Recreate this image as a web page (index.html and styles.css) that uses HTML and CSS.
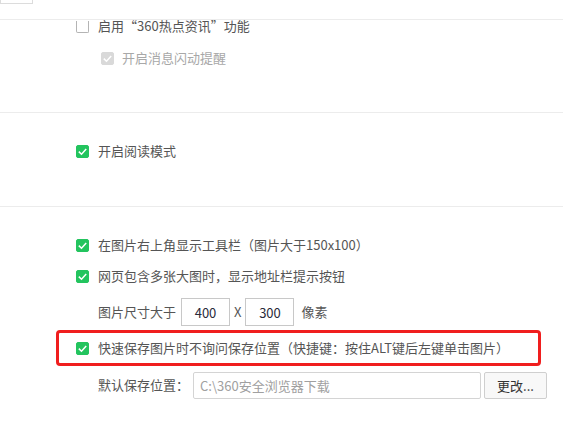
FILE: index.html
```html
<!DOCTYPE html>
<html lang="zh-CN">
<head>
    <meta charset="UTF-8">
    <title>设置</title>
    <link rel="stylesheet" href="styles.css">
</head>
<body>

<div class="stub"></div>

<div class="section section-news">
    <label class="row">
        <span class="check check-clipped"></span>
        <span class="text">启用“360热点资讯”功能</span>
    </label>
    <label class="row row-sub disabled">
        <span class="check check-disabled">
            <svg viewBox="0 0 13 13"><polyline points="2.8,6.6 5.5,9.2 10.2,4"/></svg>
        </span>
        <span class="text">开启消息闪动提醒</span>
    </label>
</div>

<div class="section section-read">
    <label class="row">
        <span class="check checked">
            <svg viewBox="0 0 13 13"><polyline points="2.8,6.6 5.5,9.2 10.2,4"/></svg>
        </span>
        <span class="text">开启阅读模式</span>
    </label>
</div>

<div class="section section-image">
    <label class="row">
        <span class="check checked">
            <svg viewBox="0 0 13 13"><polyline points="2.8,6.6 5.5,9.2 10.2,4"/></svg>
        </span>
        <span class="text">在图片右上角显示工具栏（图片大于150x100）</span>
    </label>
    <label class="row row-gap">
        <span class="check checked">
            <svg viewBox="0 0 13 13"><polyline points="2.8,6.6 5.5,9.2 10.2,4"/></svg>
        </span>
        <span class="text">网页包含多张大图时，显示地址栏提示按钮</span>
    </label>
    <div class="row row-size">
        <span class="text">图片尺寸大于</span>
        <input class="num" type="text" value="400">
        <span class="text times">X</span>
        <input class="num" type="text" value="300">
        <span class="text unit">像素</span>
    </div>
    <div class="highlight">
        <label class="row">
            <span class="check checked">
                <svg viewBox="0 0 13 13"><polyline points="2.8,6.6 5.5,9.2 10.2,4"/></svg>
            </span>
            <span class="text">快速保存图片时不询问保存位置（快捷键：按住ALT键后左键单击图片）</span>
        </label>
    </div>
    <div class="row row-path">
        <span class="text">默认保存位置：</span>
        <input class="path" type="text" value="C:\360安全浏览器下载" disabled>
        <button class="change">更改...</button>
    </div>
</div>

</body>
</html>
```

FILE: styles.css
```css
* {
    margin: 0;
    padding: 0;
    box-sizing: border-box;
}

body {
    font-family: "Noto Sans CJK SC", "Microsoft YaHei", sans-serif;
    font-size: 13px;
    line-height: 13px;
    color: #555;
    background-color: #fff;
    width: 563px;
    overflow: hidden;
}

.stub {
    width: 33px;
    height: 4px;
    border: 1px solid #dcdcdc;
    border-top: none;
    margin-bottom: 15px;
}

.section {
    border-top: 1px solid #ececec;
}

.section-news {
    height: 93px;
}

.section-read {
    height: 94px;
    padding-top: 32px;
}

.section-image {
    padding-top: 32px;
    padding-bottom: 20px;
}

.row {
    display: flex;
    align-items: center;
    height: 13px;
    padding-left: 98px;
    white-space: nowrap;
}

label.row {
    padding-left: 76px;
}

/* the CJK font sits low in its line box, lift the glyphs a little */
.text {
    padding-bottom: 2px;
}

.row-sub {
    margin-top: 19px;
    padding-left: 101px !important;
}

.disabled {
    color: #a8a8a8;
}

.check {
    flex: none;
    width: 13px;
    height: 13px;
    margin-right: 9px;
    border: 1px solid #b4b4b4;
    border-radius: 2px;
    background-color: #fff;
    display: flex;
    align-items: center;
    justify-content: center;
}

.check svg {
    flex: none;
    width: 13px;
    height: 13px;
    fill: none;
    stroke: #fff;
    stroke-width: 1.5;
}

.check-clipped {
    height: 12px;
    border-top: none;
    border-radius: 0 0 2px 2px;
}

.check.checked {
    background-color: #23c45e;
    border-color: #23c45e;
}

.check-disabled {
    background-color: #d9d9d9;
    border-color: #d9d9d9;
    margin-right: 8px;
}

.row-gap {
    margin-top: 18px;
}

.row-size {
    height: 28px;
    margin-top: 15px;
}

.num {
    width: 49px;
    height: 28px;
    margin-left: 5px;
    border: 1px solid #c8c8c8;
    font-family: inherit;
    font-size: 13px;
    color: #2a2a3a;
    text-align: center;
    outline: none;
}

.times {
    margin: 0 4px 0 4px;
}

.times + .num {
    margin-left: 0;
}

.unit {
    margin-left: 7px;
}

.highlight {
    width: 485px;
    height: 36px;
    margin: 4px 0 0 56px;
    border: 3px solid #f01e1e;
    border-radius: 4px;
    display: flex;
    align-items: center;
}

.highlight .row {
    padding-left: 17px;
}

.row-path {
    height: 27px;
    margin-top: 6px;
}

.path {
    width: 288px;
    height: 27px;
    margin-left: 4px;
    padding-left: 6px;
    border: 1px solid #d4d4d4;
    border-radius: 2px;
    background-color: #fff;
    font-family: inherit;
    font-size: 13px;
    color: #a0a0a0;
}

.change {
    width: 63px;
    height: 27px;
    margin-left: 3px;
    border: 1px solid #cfcfcf;
    border-radius: 2px;
    background-color: #f8f8f8;
    font-family: inherit;
    font-size: 13px;
    color: #333;
}
```
